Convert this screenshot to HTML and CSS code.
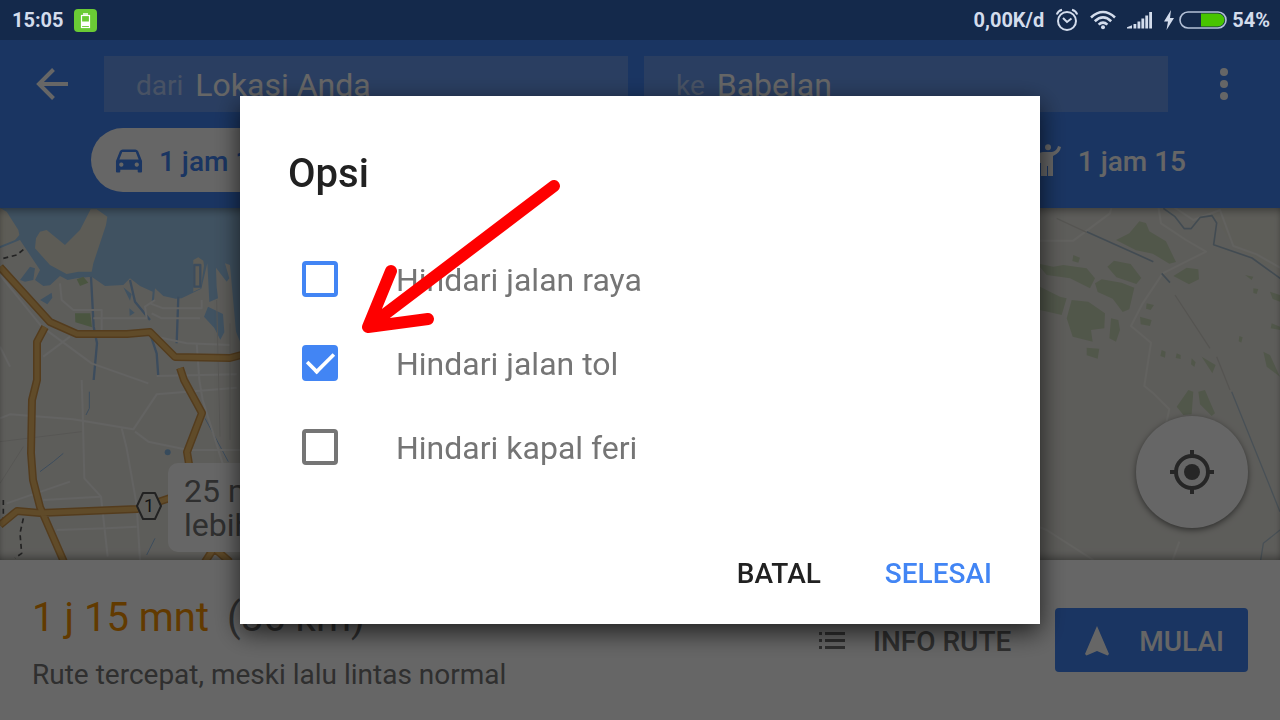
FILE: index.html
```html
<!DOCTYPE html>
<html lang="id">
<head>
<meta charset="utf-8">
<meta name="viewport" content="width=device-width, initial-scale=1">
<title>Opsi rute</title>
<link rel="stylesheet" href="styles.css">
</head>
<body>
<div class="status">
  <div class="status-side">
    <span>15:05</span>
    <svg width="23" height="23" viewBox="0 0 23 23"><rect width="23" height="23" rx="4" fill="#6acb35"/><path d="M9 5h5" stroke="#fff" stroke-width="1.500"/><rect x="7.500" y="6.500" width="8" height="12" fill="none" stroke="#fff" stroke-width="1.200"/><path d="M8 12.500h7v4.500H8z" fill="#fff"/></svg>
  </div>
  <div class="status-side status-right">
    <span>0,00K/d</span>
    <svg width="24" height="24" viewBox="0 0 24 24" fill="none" stroke="#d3dcec" stroke-width="2"><circle cx="12" cy="13" r="9"/><path d="M8 10l4 4 4.500-3.500M1.800 6.500Q3 3 7 1.800M22.200 6.500Q21 3 17 1.800"/></svg>
    <svg width="26" height="20" viewBox="0 0 26 20" fill="none" stroke="#d3dcec" stroke-width="2.600"><path d="M1 7.500Q13-3.500 25 7.500M4.800 11.200Q13 3.500 21.200 11.200M8.600 14.600Q13 10.600 17.400 14.600"/><circle cx="13" cy="17.200" r="2" fill="#d3dcec" stroke="none"/></svg>
    <svg width="26" height="18" viewBox="0 0 26 18" fill="#d3dcec"><path d="M0 17.500v-1.200l5-2v3.200zM6.500 13h2.800v4.500H6.500zM10.500 10.500h2.800v7h-2.800zM14.400 7.500h2.800v10h-2.800zM18.300 4.500h2.800v13h-2.800zM22.200 1H25v16.500h-2.800z"/></svg>
    <div class="battery">
      <svg width="12" height="22" viewBox="0 0 12 22"><path d="M8 1L1 12.500h4L3.500 21 11 9H7z" fill="#d3dcec"/></svg>
      <svg width="48" height="18" viewBox="0 0 48 18"><path d="M22 2.500h17a6.500 6.500 0 0 1 0 13H22z" fill="#48c400"/><rect x="1" y="1" width="46" height="16" rx="8" fill="none" stroke="#b4c1d8" stroke-width="1.600"/></svg>
      <span class="percent">54%</span>
    </div>
  </div>
</div>

<header class="header">
  <div class="search">
    <button class="icon-button" aria-label="Kembali"><svg width="32" height="32" viewBox="0 0 32 32" fill="none" stroke="#fff" stroke-width="4"><path d="M32 16H3M17.500 1.500L3 16l14.500 14.500"/></svg></button>
    <div class="field"><label for="from">dari</label><input id="from" type="text" value="Lokasi Anda"></div>
    <div class="field"><label for="to">ke</label><input id="to" type="text" value="Babelan"></div>
    <button class="icon-button" aria-label="Lainnya"><svg width="8" height="32" viewBox="0 0 8 32" fill="#fff"><circle cx="4" cy="4" r="4"/><circle cx="4" cy="16" r="4"/><circle cx="4" cy="28" r="4"/></svg></button>
  </div>
  <nav class="modes">
    <button class="mode mode-active"><svg width="28" height="26" viewBox="0 0 29 26"><path fill-rule="evenodd" d="M5 3Q6 1 8 1h13q2 0 3 2l4 10v11q0 1-1 1h-2.500q-1 0-1-1v-2h-18v2q0 1-1 1H2q-1 0-1-1V13zm2.500.8L4.500 11.500h20l-3-7.700zM6.500 14.500a2.200 2.200 0 1 0 .1 0zm16 0a2.200 2.200 0 1 0 .1 0z" fill="#4285f4"/></svg>1 jam 15</button>
    <button class="mode"><svg width="38" height="34" viewBox="0 0 38 34" fill="#fff"><circle cx="24" cy="3.200" r="3"/><path d="M15 10q1-2 4-2h9q5-1 6-6l3 1q-1 6-8 9v20h-5V22h-1v10h-6V19h-2z"/><path d="M2 14h12v18H2z"/></svg>1 jam 15</button>
  </nav>
</header>

<main class="map">
  <svg class="map-canvas" viewBox="0 208 1280 352" preserveAspectRatio="xMidYMid slice" fill="none" stroke-linejoin="round" aria-hidden="true">
    <rect y="208" width="1280" height="352" fill="#e9e8e1"/>
    <g transform="translate(0 200) scale(.33333)">
      <path fill="#a0cdf3" d="M0 24H720V425L708 395 690 195 675 190 688 235 680 245 648 203 650 260 654 295 628 306 622 190 604 266 545 295 527 296 490 288 465 265 462 300 455 305 458 275 420 258 390 235 370 255 315 258 275 230 230 235 203 240 180 228 150 256 130 258 105 240 120 210 80 150 60 120 0 145z"/>
      <path fill="#e9e6d6" d="M0 24L20 35 55 90 58 105 45 120 0 138zM120 95L140 90 195 135 240 90 272 28 290 28 322 50 318 75 280 190 275 215 235 215 200 222 150 195 105 145 108 115zM580 180l15-8 15 10 2 15-10 68-22 10z"/>
      <path fill="#a0cdf3" d="M60 240l30-40 15 5-5 35-25 5zM120 300l35-22 2 15-15 20zM612 350l12-30 45 22 4 55-12 22-18-35zM370 262l25 20-5 20zM388 325l16 13-15 10z"/>
      <path fill="#b8d5a1" d="M225 340h46l5 42-50-15zM230 238l20-8 15 18-25 10z"/>
      <circle cx="503" cy="757" r="9" fill="#8bbbe6"/>
      <path stroke="#96bee8" stroke-width="7" d="M273 230l8 150 10 50-10 110M390 240l15 65 45 55M535 290l-5 140M450 400l20 60 5 70M583 195h18v65h-18z"/>
      <path stroke="#96bee8" stroke-width="3" d="M268 575v50l-10 20M615 655l70 130M120 815l40-30 30-25M465 1015l-25 50"/>
      <path stroke="#f7f7f4" stroke-width="6" d="M0 225l125 155 150 110 170 60M180 250l5 50 35 30h85v80M130 470l80-60M280 355h160l-5-35 30-20M450 310l40 15h115v-25M455 340l30 15h115M470 410l90 20 130 5M590 430l8 110M470 528l240-5M0 655l30-12 190 15 180 30 70-105 240-20M365 685l15 60 30 170 10 165M405 695l40 30 120 25h155M598 540l10 60 60 190M245 540l3 90 5 205 50 55 20 180M0 440l30 60M130 900l170-10M20 910l190-65M170 990l150-5 90-5"/>
      <path stroke="#d8d7d1" stroke-width="3" d="M0 725l245-30M650 300l10 410M690 370v350M0 850l70-110"/>
      <path stroke="#555" stroke-width="5" stroke-dasharray="15 11" d="M10 175l40-10 25-20M10 900v55M70 955l-10 45 5 60-20 14"/>
    </g>
    <g stroke="#d1974a" stroke-width="8">
      <path d="M0 267L50 322 77 334H127L150 332 175 357 230 358 260 350M45 327L37 342V380L32 400 31 453 33 480 40 507 64 562M180 368L184 380 202 413 187 452 190 470M0 525L17 511 40 513 137 509 170 498M205 562L214 548 230 562"/>
    </g>
    <g stroke="#f0bc68" stroke-width="5">
      <path d="M0 267L50 322 77 334H127L150 332 175 357 230 358 260 350M45 327L37 342V380L32 400 31 453 33 480 40 507 64 562M180 368L184 380 202 413 187 452 190 470M0 525L17 511 40 513 137 509 170 498M205 562L214 548 230 562"/>
    </g>
    <path d="M143 493h12l6 13-6 13h-12l-6-13z" fill="#e9e8e1" stroke="#555" stroke-width="2"/>
    <text class="shield" x="149" y="512">1</text>
    <g transform="translate(1030 200) scale(.33333)">
      <path fill="#e9e8dd" d="M520 24H750V220L610 140 560 60z"/>
      <path fill="#cbd9ba" d="M258 120l40-20 30-36 20 5 10 25 50 30 30 62-20 5-50-30-50-10zM232 200l20-18 50 10 32 42-15 18-60-20zM195 250l20-12 60 10 38 15-15 65-20 8-30-40-45-20zM20 190l50 10 30-5 70 10 25 30-15 30-60-30-70-10zM30 260l60 30 20 5-15 50-65-15zM125 300l50 5 50 35-2 45-40 5 5 35-60-15-18-55zM243 355l22 5 5 30-12 35-20-10zM170 443l38 3-5 30-33-10zM430 228l40-25 35 5 2 30-30 15zM720 275l30 10v20l-22-8zM725 370l25 10v10l-28-5zM700 455l20 10 30 65-40-30zM515 470l42 25-10 25zM330 350l35 10-5 18-28-5zM645 225l25 5-5 10zM395 450l12 5-2 18-14-5zM440 460l12 5v12l-15-3zM485 475l12 12-4 14-10-8zM670 265l15 2-5 15-10-3zM628 408l10 4-4 16-8-4zM130 165l20 8-5 15-18-5zM350 310l22 5-10 15-14-4zM440 620l35-50 15 5-5 68-25 2zM505 575l20-5 15 35 15 35-10 8-35-35z"/>
      <path stroke="#f5f4ee" stroke-width="6" d="M20 122h110l110-82 5-20M385 20l8 50 75 50 60 35-60 30-70 35-60 90-35 68 60 50-20 130 25 20 50 50-10 45M0 970l50 20 140 90M448 1025l-20 55M430 20l60 40 80-30 40 108 70 25 70 40"/>
      <path stroke="#a6bccc" stroke-width="5" d="M400 25l35 25 28 36h20l28-34 35-5 14 22-9 65 115 40 90 65M170 95l200 90M395 220l25 28"/>
      <path stroke="#d4d3cb" stroke-width="4" d="M80 55l90 42M435 285l105 160M560 470l40 100"/>
      <path stroke="#b4c8d6" stroke-width="4" d="M605 575l145 360M750 990l-50 40-8 50"/>
    </g>
  </svg>
  <div class="callout">25 mnt<br>lebih lambat</div>
  <button class="locate" aria-label="Lokasi saya"><svg width="44" height="44" viewBox="0 0 44 44" fill="none" stroke="#606060" stroke-width="4"><circle cx="22" cy="22" r="16"/><circle cx="22" cy="22" r="8" fill="#606060" stroke="none"/><path d="M22 0v6M22 38v6M0 22h6M38 22h6"/></svg></button>
</main>

<footer class="sheet">
  <div class="summary">
    <div class="time"><span class="duration">1 j 15 mnt</span><span>(86 km)</span></div>
    <div class="note">Rute tercepat, meski lalu lintas normal</div>
  </div>
  <button class="info"><svg width="26" height="18" viewBox="0 0 26 18" fill="#757575"><path d="M0 0h3v3H0zM6 0h20v3H6zM0 7h3v3H0zM6 7h20v3H6zM0 14h3v3H0zM6 14h20v3H6z"/></svg>INFO RUTE</button>
  <button class="start"><svg width="24" height="30" viewBox="0 0 24 30"><path d="M12 0l12 28-1.500 1.500L12 25 1.500 29.500 0 28z" fill="#fff"/></svg>MULAI</button>
</footer>

<div class="scrim">
  <form class="dialog" role="dialog" aria-labelledby="dialog-title">
    <h1 id="dialog-title">Opsi</h1>
    <div class="options">
      <label class="option"><input class="accent" type="checkbox"><span>Hindari jalan raya</span></label>
      <label class="option"><input type="checkbox" checked><span>Hindari jalan tol</span></label>
      <label class="option"><input type="checkbox"><span>Hindari kapal feri</span></label>
    </div>
    <div class="actions">
      <button type="button">BATAL</button>
      <button type="button" class="primary">SELESAI</button>
    </div>
    <svg class="pointer" width="210" height="166" viewBox="0 0 210 166" fill="none" stroke="#fe0000" stroke-width="12" stroke-linecap="round" stroke-linejoin="round" aria-hidden="true"><path d="M199 13L13 154M36 98L13 154l60-8"/></svg>
  </form>
</div>
</body>
</html>
```
FILE: styles.css
```css
* { box-sizing: border-box; }

body {
  margin: 0;
  min-height: 100vh;
  display: flex;
  flex-direction: column;
  font-family: Roboto, "Liberation Sans", sans-serif;
  background: #fff;
}

button {
  border: 0;
  padding: 0;
  background: none;
  font: inherit;
  color: inherit;
}

svg { display: block; flex: none; }

/* System status bar, above the scrim */
.status {
  position: relative;
  z-index: 3;
  height: 40px;
  padding: 0 10px 0 12px;
  display: flex;
  align-items: center;
  justify-content: space-between;
  background: #14294b;
  color: #d3dcec;
  font-size: 20px;
  font-weight: 700;
}

.status-side { display: flex; align-items: center; gap: 10px; }
.status-right { gap: 11px; }
.battery { display: flex; align-items: center; gap: 4px; margin-left: -1px; }
.percent { margin-left: 1px; }

/* Route header */
.header {
  height: 168px;
  padding-top: 16px;
  background: #4285f4;
  color: #fff;
}

.search { display: flex; gap: 16px; align-items: center; }

.icon-button {
  width: 104px;
  height: 56px;
  display: flex;
  align-items: center;
  justify-content: center;
}
.icon-button:first-child { margin-right: -16px; }
.icon-button:last-child { margin-left: -16px; width: 112px; }

.field {
  flex: 1;
  min-width: 0;
  height: 56px;
  padding: 2px 32px 0;
  display: flex;
  align-items: center;
  gap: 12px;
  background: #6a9cf2;
  font-size: 32px;
}
.field label { font-size: 28px; color: #b5cefa; }
.field input {
  flex: 1;
  min-width: 0;
  border: 0;
  padding: 0;
  background: none;
  color: #fff;
  font: inherit;
}

.modes {
  margin-top: 16px;
  padding: 0 70px 0 91px;
  display: flex;
  justify-content: space-between;
}
.mode {
  height: 64px;
  padding: 2px 24px 0;
  display: flex;
  align-items: center;
  gap: 16px;
  border-radius: 32px;
  font-size: 28px;
  font-weight: 500;
}
.mode-active { background: #fff; color: #4285f4; }

/* Map */
.map {
  position: relative;
  flex: 1;
  min-height: 300px;
  overflow: hidden;
  box-shadow: inset 0 6px 8px -4px rgba(0, 0, 0, .4), inset 0 -6px 8px -4px rgba(0, 0, 0, .4);
}
.map-canvas {
  position: absolute;
  z-index: -1;
  inset: 0;
  width: 100%;
  height: 100%;
}
.shield { font-size: 18px; fill: #333; text-anchor: middle; }
.callout {
  position: absolute;
  left: 168px;
  bottom: 8px;
  padding: 11px 16px 10px;
  border-radius: 10px;
  background: #fff;
  color: #757575;
  font-size: 32px;
  line-height: 34px;
}
.locate {
  position: absolute;
  right: 32px;
  bottom: 32px;
  width: 112px;
  height: 112px;
  display: flex;
  align-items: center;
  justify-content: center;
  border-radius: 50%;
  background: #fff;
  box-shadow: 0 2px 6px rgba(0, 0, 0, .5);
}

/* Route summary */
.sheet {
  min-height: 160px;
  padding: 0 32px;
  display: flex;
  align-items: center;
  background: #fff;
  color: #757575;
  font-size: 28px;
}
.summary { flex: 1; padding-top: 16px; }
.time { display: flex; gap: 18px; font-size: 40px; line-height: 56px; }
.duration { color: #f59200; }
.note { line-height: 58px; padding-bottom: 2px; }
.info, .start {
  height: 64px;
  padding-top: 2px;
  display: flex;
  align-items: center;
  font-weight: 500;
}
.info { gap: 28px; margin-right: 44px; }
.start {
  padding: 2px 24px 0 30px;
  gap: 30px;
  border-radius: 4px;
  background: #4285f4;
  color: #fff;
}

/* Options dialog */
.scrim {
  position: fixed;
  z-index: 2;
  inset: 0;
  display: flex;
  align-items: center;
  justify-content: center;
  background: rgba(0, 0, 0, .6);
}
.dialog {
  position: relative;
  width: 800px;
  max-width: 90vw;
  padding: 48px 48px 16px;
  background: #fff;
  box-shadow: 0 8px 24px rgba(0, 0, 0, .7);
}
.dialog h1 {
  margin: 0;
  font-size: 40px;
  line-height: 60px;
  font-weight: 500;
  color: #212121;
}
.options { padding: 33px 14px 0; }
.option {
  height: 84px;
  display: flex;
  align-items: center;
  gap: 58px;
  font-size: 32px;
  color: #757575;
}
.option span { padding-top: 2px; }
.option input {
  appearance: none;
  width: 36px;
  height: 36px;
  margin: 0;
  border: 4px solid #757575;
  border-radius: 4px;
  display: grid;
  place-items: center;
}
.option .accent { border-color: #4285f4; }
.option input:checked { border-color: #4285f4; background: #4285f4; }
.option input:checked::after {
  content: "";
  width: 25px;
  height: 13px;
  margin: 0 2px 8px 0;
  border: solid #fff;
  border-width: 0 0 4px 4px;
  transform: rotate(-45deg) scale(.9);
}
.actions {
  padding-top: 48px;
  display: flex;
  justify-content: flex-end;
  gap: 64px;
  font-size: 28px;
  font-weight: 500;
  color: #212121;
}
.actions button { height: 71px; padding-top: 2px; }
.actions .primary { color: #4285f4; }
.pointer { position: absolute; left: 115px; top: 77px; }
```
